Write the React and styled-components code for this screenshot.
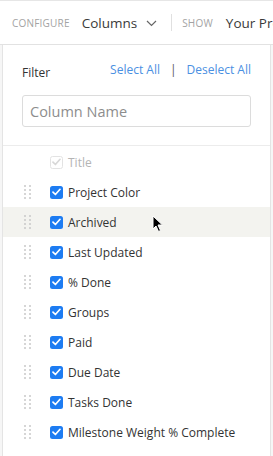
import React from "react";
import styled, { createGlobalStyle } from "styled-components";

const Global = createGlobalStyle`
  html, body { margin: 0; padding: 0; background: #f6f6f6; }
  body { font-family: "Open Sans", "Liberation Sans", sans-serif; overflow: hidden; }
  * { box-sizing: border-box; }
`;

const Page = styled.div`
  width: 273px;
  height: 456px;
  display: flex;
  flex-direction: column;
  overflow: hidden;
`;

const TopBar = styled.div`
  height: 45px;
  flex: none;
  background: #fff;
  border-top: 1px solid #e6e6e6;
  border-bottom: 1px solid #e2e2e2;
  display: flex;
  align-items: center;
  padding-left: 12px;
  white-space: nowrap;
  overflow: hidden;
  & > * { flex: none; }
`;

const Caption = styled.span`
  font-size: 10px;
  color: #a3a3a3;
  letter-spacing: 0.2px;
  margin-right: ${(p) => p.$gap}px;
`;

const Big = styled.span`
  font-size: 13.5px;
  color: #3a3a3a;
`;

const Chevron = styled.svg`
  margin-left: 9px;
  margin-top: 2px;
`;

const Divider = styled.span`
  width: 1px;
  height: 17px;
  background: #e0e0e0;
  margin: 0 10px 0 14px;
`;

const Panel = styled.div`
  flex: 1;
  margin: 0 2px 0 2px;
  background: #fff;
  border-left: 1px solid #e4e4e4;
  border-right: 1px solid #e4e4e4;
  display: flex;
  flex-direction: column;
  min-height: 0;
`;

const FilterSection = styled.div`
  padding: 16px 19px 18px 19px;
  border-bottom: 1px solid #ececec;
`;

const FilterHead = styled.div`
  display: flex;
  align-items: center;
  justify-content: space-between;
  height: 16px;
  margin-bottom: 18px;
`;

const FilterLabel = styled.span`
  font-size: 12px;
  color: #333;
  margin-top: 6px;
`;

const Links = styled.div`
  display: flex;
  align-items: center;
  font-size: 12px;
  color: #4a90e2;
`;

const Sep = styled.span`
  color: #555;
  margin: 0 10px;
`;

const Input = styled.input`
  display: block;
  width: 229px;
  height: 32px;
  border: 1px solid #dcdcdc;
  border-radius: 3px;
  padding: 0 7px;
  font-family: inherit;
  font-size: 14.5px;
  color: #333;
  outline: none;
  &::placeholder { color: #8d8d8d; }
`;

const List = styled.div`
  display: flex;
  flex-direction: column;
  position: relative;
  padding-top: 1px;
`;

const Row = styled.div`
  height: 30px;
  display: flex;
  align-items: center;
  background: ${(p) => (p.$hover ? "#f3f3ef" : "transparent")};
  padding-left: 21px;
`;

const Handle = styled.div`
  width: 7px;
  display: grid;
  grid-template-columns: 2px 2px;
  column-gap: 3px;
  row-gap: 2px;
  margin-right: 19px;
  visibility: ${(p) => (p.$hidden ? "hidden" : "visible")};
`;

const Dot = styled.span`
  width: 2px;
  height: 2px;
  background: #c9c9c9;
  border-radius: 1px;
`;

const Box = styled.span`
  width: 13px;
  height: 13px;
  border-radius: 2.5px;
  display: flex;
  align-items: center;
  justify-content: center;
  background: ${(p) => (p.$disabled ? "#fff" : "#1d7cf2")};
  border: ${(p) => (p.$disabled ? "1px solid #e3e3e3" : "none")};
  margin-right: 5px;
`;

const Label = styled.span`
  font-size: 12px;
  color: ${(p) => (p.$disabled ? "#b4b4b4" : "#333")};
  white-space: nowrap;
`;

const Cursor = styled.svg`
  position: absolute;
  left: 149px;
  top: 69px;
`;

const items = [
  "Project Color",
  "Archived",
  "Last Updated",
  "% Done",
  "Groups",
  "Paid",
  "Due Date",
  "Tasks Done",
  "Milestone Weight % Complete",
];

function Check({ disabled }) {
  return (
    <Box $disabled={disabled}>
      <svg width="9" height="8" viewBox="0 0 9 8">
        <path
          d="M1 4.2 L3.4 6.5 L8 1.3"
          fill="none"
          stroke={disabled ? "#d8d8d8" : "#fff"}
          strokeWidth="1.7"
          strokeLinecap="round"
          strokeLinejoin="round"
        />
      </svg>
    </Box>
  );
}

function Dots({ hidden }) {
  return (
    <Handle $hidden={hidden}>
      {Array.from({ length: 8 }).map((_, i) => (
        <Dot key={i} />
      ))}
    </Handle>
  );
}

export default function App() {
  return (
    <Page>
      <Global />
      <TopBar>
        <Caption $gap={12}>CONFIGURE</Caption>
        <Big>Columns</Big>
        <Chevron width="11" height="7" viewBox="0 0 11 7">
          <path d="M1 1 L5.5 5.5 L10 1" fill="none" stroke="#666" strokeWidth="1.2" />
        </Chevron>
        <Divider />
        <Caption $gap={13}>SHOW</Caption>
        <Big>Your Projects</Big>
      </TopBar>
      <Panel>
        <FilterSection>
          <FilterHead>
            <FilterLabel>Filter</FilterLabel>
            <Links>
              <span>Select All</span>
              <Sep>|</Sep>
              <span>Deselect All</span>
            </Links>
          </FilterHead>
          <Input placeholder="Column Name" />
        </FilterSection>
        <List>
          <Row>
            <Dots hidden />
            <Check disabled />
            <Label $disabled>Title</Label>
          </Row>
          {items.map((t) => (
            <Row key={t} $hover={t === "Archived"}>
              <Dots />
              <Check />
              <Label>{t}</Label>
            </Row>
          ))}
          <Cursor width="12" height="18" viewBox="0 0 12 18">
            <path
              d="M1 1 L1 14 L4 11 L6.5 16.5 L8.5 15.5 L6 10 L10.5 10 Z"
              fill="#000"
              stroke="#fff"
              strokeWidth="1"
              strokeLinejoin="round"
            />
          </Cursor>
        </List>
      </Panel>
    </Page>
  );
}
